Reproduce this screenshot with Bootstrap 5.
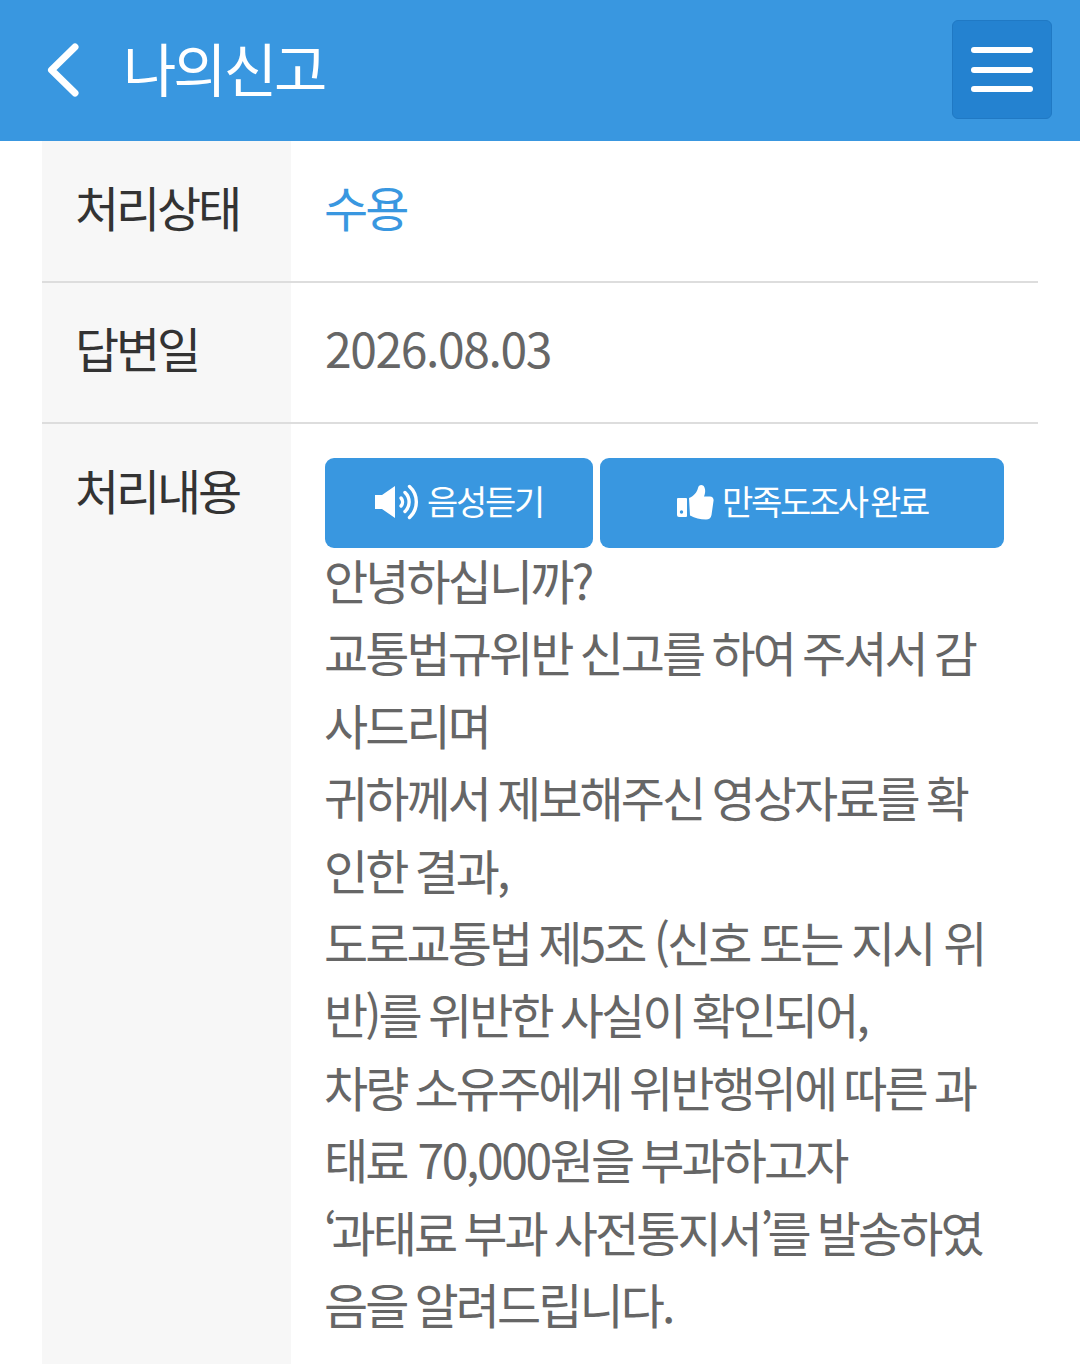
<!DOCTYPE html>
<html lang="ko">
<head>
<meta charset="utf-8">
<title>나의신고</title>
<link href="https://cdn.jsdelivr.net/npm/bootstrap@5.3.0/dist/css/bootstrap.min.css" rel="stylesheet">
<style>
html,body{height:1364px;overflow:hidden}
body{background:#fff;font-family:"Noto Sans CJK KR","Noto Sans",sans-serif;color:#666}
.top-bar{height:141px;background:#3997e0;color:#fff;padding:0 28px 2px 46px}
.back-link{width:36px;line-height:0;margin-right:41px}
.page-title{font-size:58px;font-weight:400;letter-spacing:-3px;line-height:1;margin:0 0 6px}
.menu-btn{width:100px;height:99px;background:#2482d0;border:1px solid #2079c4;border-radius:6px;gap:13.5px;padding:0}
.menu-btn span{display:block;width:62px;height:6px;background:#fff;border-radius:3px}
.info-wrap{margin:0 42px;height:1223px;overflow:hidden}
.info-row{border-bottom:2px solid #ddd}
.info-row:last-child{border-bottom:0;flex:1}
.info-label{width:249px;flex:none;background:#f7f7f7;color:#333;font-size:48px;letter-spacing:-3.2px;padding:32px 0 0 33px;line-height:66px}
.info-value{flex:1;padding:32px 34px 0 33px;font-size:48px;letter-spacing:-2.9px;line-height:66px;min-height:139px}
.row-first .info-value{min-height:140px}
.row-date .info-label,.row-date .info-value{padding-top:31px}
.row-date .info-value{padding-left:34px}
.status-ok{color:#3997e0}
.act-row{margin:2px 0 0 1px;gap:7px}
.act-btn{height:90px;background:#3997e0;color:#fff;border:0;border-radius:9px;font-size:34px;letter-spacing:-2.3px;word-spacing:-4px;padding:0;gap:8px}
.act-btn:hover{background:#3997e0;color:#fff}
.act-btn span{margin-bottom:5px}
.act-btn svg{margin-bottom:2px}
.act-listen{width:268px}
.act-done{width:404px}
.answer-text{font-size:48px;line-height:72.4px;letter-spacing:-2.9px;word-spacing:-2.5px;margin:-5px 0 0;word-break:break-all}
.num-run{letter-spacing:-1.4px}
.answer-text .num-run{letter-spacing:-2.4px;margin-left:3px}
.quote-open{letter-spacing:-6px}
.quote-close{letter-spacing:-6px}
.paren-run{word-spacing:-1px;margin-left:1px}
</style>
</head>
<body>
<header class="top-bar d-flex align-items-center">
  <a href="#" class="back-link" aria-label="뒤로">
    <svg width="36" height="56" viewBox="0 0 36 56"><path d="M29 5 5.500 28 29 51" fill="none" stroke="#fff" stroke-width="7" stroke-linecap="round" stroke-linejoin="round"/></svg>
  </a>
  <h1 class="page-title">나의신고</h1>
  <button class="menu-btn btn ms-auto d-flex flex-column align-items-center justify-content-center" aria-label="메뉴"><span></span><span></span><span></span></button>
</header>
<main class="info-wrap d-flex flex-column">
  <div class="info-row row-first d-flex">
    <div class="info-label">처리상태</div>
    <div class="info-value status-ok">수용</div>
  </div>
  <div class="info-row row-date d-flex">
    <div class="info-label">답변일</div>
    <div class="info-value"><span class="num-run">2026.08.03</span></div>
  </div>
  <div class="info-row d-flex">
    <div class="info-label">처리내용</div>
    <div class="info-value">
      <div class="act-row d-flex">
        <a href="#" class="act-btn act-listen btn d-flex align-items-center justify-content-center">
          <svg width="44" height="36" viewBox="0 0 44 36"><path d="M0 11h7L20 2v32L7 25H0z" fill="#fff"/><g fill="none" stroke="#fff" stroke-width="3.400" stroke-linecap="round"><path d="M26 14a6 6 0 0 1 0 8"/><path d="M30 8.500a13 13 0 0 1 0 19"/><path d="M34.500 2.500a21 21 0 0 1 0 31"/></g></svg>
          <span>음성듣기</span>
        </a>
        <a href="#" class="act-btn act-done btn d-flex align-items-center justify-content-center">
          <svg width="38" height="36" viewBox="0 0 38 36"><path d="M2 14h8a1 1 0 0 1 1 1v17a1 1 0 0 1-1 1H3a2 2 0 0 1-2-2V15a1 1 0 0 1 1-1z" fill="#fff"/><circle cx="5.500" cy="28" r="1.700" fill="#3997e0"/><path d="M13 14c5-2 8-6 9-10 .6-3.500 5-4 6.500-.5 1.300 3 .5 6.500-.5 9h6c2.500 0 4 2 3.500 4.500l-2 14c-.5 3-2.500 4.500-5.500 4.500-6 0-11-1.500-16-4z" fill="#fff"/></svg>
          <span>만족도조사 완료</span>
        </a>
      </div>
      <p class="answer-text">안녕하십니까?<br>교통법규위반 신고를 하여 주셔서 감사드리며<br>귀하께서 제보해주신 영상자료를 확인한 결과,<br>도로교통법 제5조 <span class="paren-run">(신호 또는 지시 위반)</span>를 위반한 사실이 확인되어,<br>차량 소유주에게 위반행위에 따른 과태료 <span class="num-run">70,000</span>원을 부과하고자<br><span class="quote-open">‘</span>과태료 부과 사전통지서<span class="quote-close">’</span>를 발송하였음을 알려드립니다.</p>
    </div>
  </div>
</main>
<script src="https://cdn.jsdelivr.net/npm/bootstrap@5.3.0/dist/js/bootstrap.bundle.min.js"></script>
</body>
</html>
